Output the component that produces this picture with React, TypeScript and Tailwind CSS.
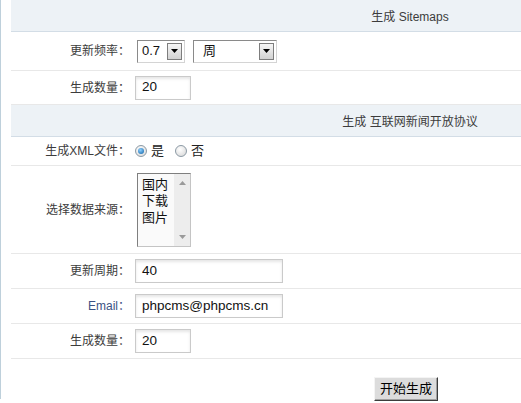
import React from "react";

function SectionHead({ title }: { title: string }) {
    return (
        <div className="flex h-[32px] items-center justify-center border-b border-[#d3dde6] bg-[#edf2f6] pl-[288px] text-[#3c3c3c]">
            <span className="pt-[2px]">{title}</span>
        </div>
    );
}

function Row({ label, height, labelClass = "", children }: { label: string; height: string; labelClass?: string; children: React.ReactNode }) {
    return (
        <div className={`flex items-center border-b border-[#e8e8e8] ${height}`}>
            <div className={`w-[124px] shrink-0 pr-[5px] text-right ${labelClass}`}>{label}</div>
            <div className="flex items-center">{children}</div>
        </div>
    );
}

function DownArrow() {
    return (
        <svg width="7" height="4" viewBox="0 0 7 4">
            <path d="M0 0h7L3.5 4z" fill="#000" />
        </svg>
    );
}

function FakeSelect({ value, width, textPad }: { value: string; width: string; textPad: string }) {
    return (
        <div className={`flex h-[23px] items-center justify-between border border-t-[#8a8a8a] border-l-[#8a8a8a] border-r-[#d4d4d4] border-b-[#d4d4d4] bg-white ${width}`}>
            <span className={`text-[13px] text-[#111] ${textPad}`}>{value}</span>
            <div className="mr-[2px] flex h-[17px] w-[15px] items-center justify-center border border-[#7d7d7d] bg-gradient-to-b from-[#f6f6f6] to-[#d2d2d2]">
                <DownArrow />
            </div>
        </div>
    );
}

function TextBox({ value, width }: { value: string; width: string }) {
    return (
        <div className={`flex h-[24px] items-center border border-[#cacaca] bg-white pl-[6px] text-[13.5px] text-[#111] shadow-[inset_0_2px_3px_rgba(0,0,0,0.10)] ${width}`}>
            {value}
        </div>
    );
}

function Radio({ checked }: { checked?: boolean }) {
    return (
        <span className="flex h-[12px] w-[12px] items-center justify-center rounded-full border border-[#8c9aa5] bg-[radial-gradient(circle_at_40%_35%,#ffffff,#d4d4d4)]">
            {checked && <span className="h-[6px] w-[6px] rounded-full bg-[radial-gradient(circle_at_40%_35%,#8fd0ff,#0a5fa3)]" />}
        </span>
    );
}

export default function App() {
    return (
        <div className="flex h-[403px] w-[521px] bg-white font-['Liberation_Sans','Noto_Sans_CJK_SC',sans-serif] text-[12px] text-[#3c3c3c]">
            <div className="h-[399px] w-px shrink-0 bg-[#bed0db]" />
            <div className="ml-[10px] w-[510px]">
                <SectionHead title="生成 Sitemaps" />
                <Row label="更新频率：" height="h-[39px]">
                    <div className="ml-[2px] flex gap-[8px]">
                        <FakeSelect value="0.7" width="w-[48px]" textPad="pl-[4px]" />
                        <FakeSelect value="周" width="w-[84px]" textPad="pl-[9px]" />
                    </div>
                </Row>
                <Row label="生成数量：" height="h-[34px]">
                    <TextBox value="20" width="w-[56px]" />
                </Row>
                <SectionHead title="生成 互联网新闻开放协议" />
                <Row label="生成XML文件：" height="h-[29px]">
                    <div className="flex items-center text-[13px]">
                        <Radio checked />
                        <span className="ml-[4px] text-[#222]">是</span>
                        <span className="ml-[11px]"><Radio /></span>
                        <span className="ml-[4px] text-[#222]">否</span>
                    </div>
                </Row>
                <Row label="选择数据来源：" height="h-[88px]">
                    <div className="ml-[2px] flex h-[74px] w-[54px] border border-t-[#7f7f7f] border-l-[#7f7f7f] border-r-[#c4c4c4] border-b-[#c4c4c4] bg-[#fafafa]">
                        <div className="flex-1 pl-[4px] pt-[3px] text-[13px] leading-[16.5px] text-[#111]">
                            <div>国内</div>
                            <div>下载</div>
                            <div>图片</div>
                        </div>
                        <div className="flex w-[16px] flex-col items-center justify-between bg-[#ededed] py-[7px]">
                            <svg width="7" height="4" viewBox="0 0 7 4"><path d="M0 4h7L3.5 0z" fill="#9a9a9a" /></svg>
                            <svg width="7" height="4" viewBox="0 0 7 4"><path d="M0 0h7L3.5 4z" fill="#9a9a9a" /></svg>
                        </div>
                    </div>
                </Row>
                <Row label="更新周期：" height="h-[35px]">
                    <TextBox value="40" width="w-[148px]" />
                </Row>
                <Row label="Email：" height="h-[35px]" labelClass="text-[#3a5283]">
                    <TextBox value="phpcms@phpcms.cn" width="w-[148px]" />
                </Row>
                <Row label="生成数量：" height="h-[35px]">
                    <TextBox value="20" width="w-[56px]" />
                </Row>
                <div className="ml-[363px] mt-[18px]">
                    <button className="h-[24px] w-[64px] border border-t-[#f4f4f4] border-l-[#f4f4f4] border-r-[#3c3c3c] border-b-[#3c3c3c] bg-[#dcdcdc] text-[13px] text-black shadow-[inset_-1px_-1px_0_#a0a0a0]">
                        开始生成
                    </button>
                </div>
            </div>
        </div>
    );
}
